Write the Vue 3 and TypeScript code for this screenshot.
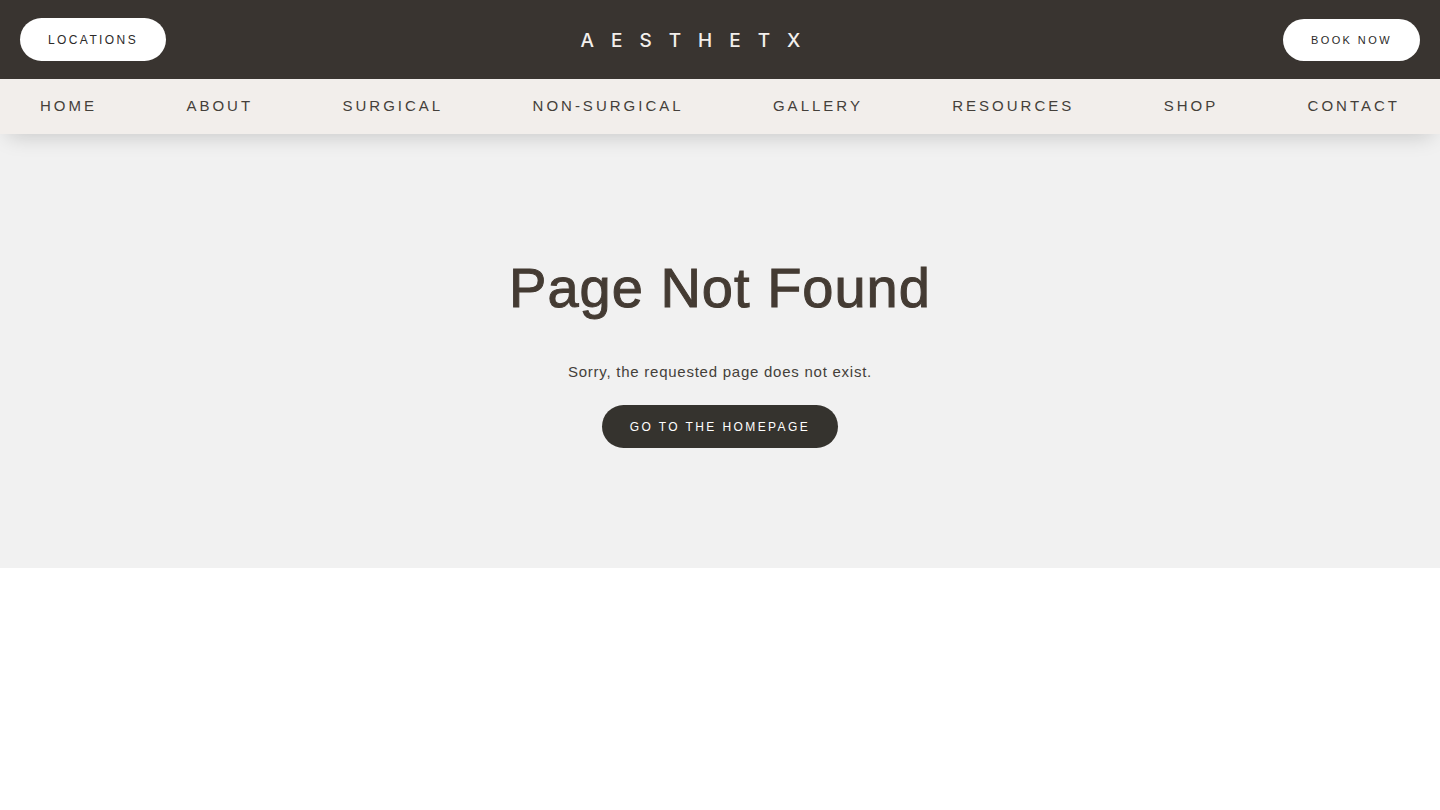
<script setup lang="ts">
interface NavItem {
  label: string
  href: string
}

const navItems: NavItem[] = [
  { label: 'Home', href: '#home' },
  { label: 'About', href: '#about' },
  { label: 'Surgical', href: '#surgical' },
  { label: 'Non-Surgical', href: '#non-surgical' },
  { label: 'Gallery', href: '#gallery' },
  { label: 'Resources', href: '#resources' },
  { label: 'Shop', href: '#shop' },
  { label: 'Contact', href: '#contact' },
]
</script>

<template>
  <div class="page">
    <header class="header">
      <div class="topbar">
        <a class="pill" href="#locations">Locations</a>
        <a class="logo" href="#home">AESTHETX</a>
        <a class="pill pill-small" href="#book">Book Now</a>
      </div>
      <nav class="nav" aria-label="Main">
        <a v-for="item in navItems" :key="item.href" class="nav-link" :href="item.href">{{ item.label }}</a>
      </nav>
    </header>
    <main class="content">
      <h1 class="title">Page Not Found</h1>
      <p class="message">Sorry, the requested page does not exist.</p>
      <a class="pill pill-dark" href="#home">Go to the homepage</a>
    </main>
  </div>
</template>

<style>
body {
  margin: 0;
  background: #fff;
}
</style>

<style scoped>
.page {
  font-family: "Liberation Sans", Arial, sans-serif;
  color: #443b33;
}

.header {
  position: relative;
  box-shadow: 0 10px 20px -8px rgba(0, 0, 0, 0.18);
}

.topbar {
  display: flex;
  align-items: center;
  justify-content: space-between;
  padding: 18px 20px;
  background: #393430;
}

.pill {
  padding: 13px 28px 12px;
  border-radius: 24px;
  background: #fff;
  color: #2c2a29;
  font-size: 12px;
  line-height: 18px;
  letter-spacing: 0.2em;
  text-transform: uppercase;
  text-decoration: none;
}

.pill-small {
  padding: 12px 28px;
  font-size: 11px;
  letter-spacing: 0.22em;
}

.pill-dark {
  background: #35332e;
  color: #fff;
}

.logo {
  width: 288px;
  padding-top: 2px;
  color: #f3efec;
  font-family: Inter, Verdana, sans-serif;
  font-size: 19px;
  font-weight: 500;
  line-height: 24px;
  letter-spacing: 17px;
  text-decoration: none;
  white-space: nowrap;
}

.nav {
  display: flex;
  justify-content: space-between;
  padding: 17px 40px 18px;
  background: #f2eeeb;
}

.nav-link {
  color: #443f3a;
  font-size: 15px;
  line-height: 20px;
  letter-spacing: 3px;
  text-transform: uppercase;
  text-decoration: none;
}

.content {
  display: flex;
  flex-direction: column;
  align-items: center;
  padding: 120px 20px;
  background: #f1f1f1;
  text-align: center;
}

.title {
  margin: 0;
  font-size: 56px;
  font-weight: 400;
  line-height: 68px;
  letter-spacing: 1px;
  -webkit-text-stroke: 1px currentColor;
}

.message {
  margin: 38px 0 21px;
  color: #443f3a;
  font-size: 15px;
  line-height: 24px;
  letter-spacing: 0.05em;
}
</style>
